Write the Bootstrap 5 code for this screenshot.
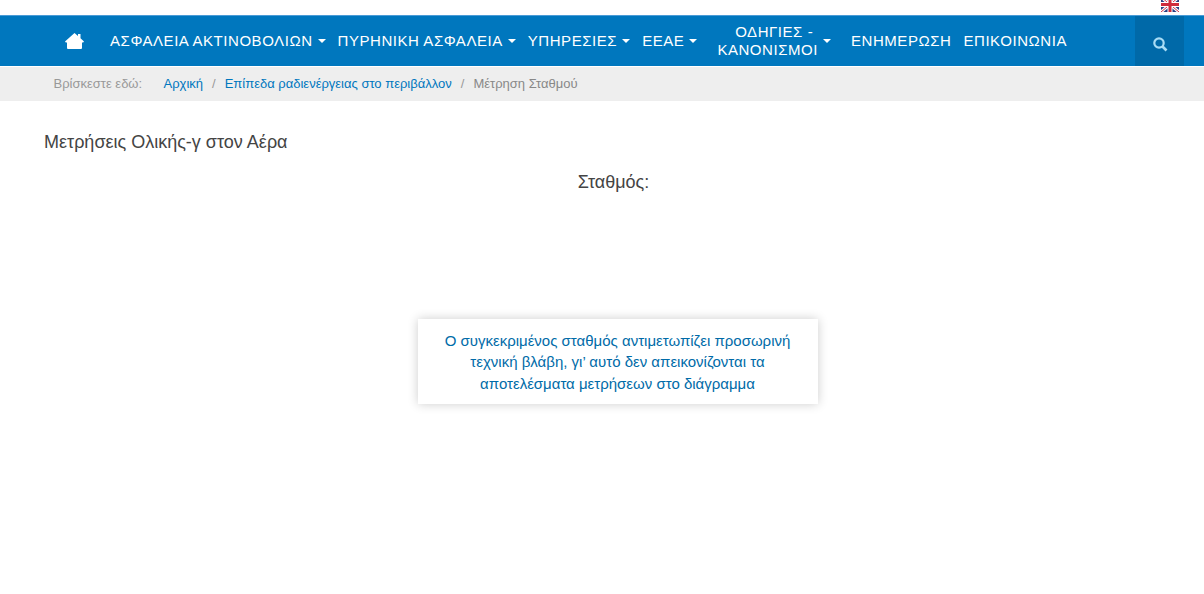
<!DOCTYPE html>
<html lang="el">
<head>
<meta charset="utf-8">
<title>Μέτρηση Σταθμού</title>
<link href="https://cdn.jsdelivr.net/npm/bootstrap@5.3.0/dist/css/bootstrap.min.css" rel="stylesheet">
<style>
body{font-family:"Liberation Sans",Arial,sans-serif;color:#333;background:#fff;min-height:594px}
.flagbar{height:15px;padding-right:25px;overflow:hidden}
.flagbar svg{display:block;margin-top:-3px}
.mainbar{height:51px;background:#0077be;border-top:1px solid #4a9bd6;padding:0 20px 0 65px}
.homelink{width:45px;color:#fff}
.menu{gap:12px;font-size:15px;letter-spacing:.55px;line-height:18px}
.menu a{color:#fff;text-decoration:none;white-space:nowrap}
.menu a.dropdown-toggle::after{margin-left:5px;vertical-align:3px;border-top-width:4.5px;border-left-width:4.5px;border-right-width:4.5px}
.twoline{margin:0 8px;display:flex;align-items:center}
.twoline span{display:block;text-align:center}
.twoline .firstline{padding-left:13px}
.searchcell{width:49px;height:50px;background:#0069a8;padding-top:6px}
.crumbbar{height:35px;background:#eee;border-top:1px solid #fff;padding-left:53.5px;font-size:13px;color:#999}
.crumbbar .breadcrumb{font-size:13px;--bs-breadcrumb-divider-color:#999;--bs-breadcrumb-item-active-color:#888;--bs-breadcrumb-item-padding-x:9px}
.crumbbar a{color:#0077be;text-decoration:none}
.crumblabel{width:110px}
.maintitle{font-size:18px;font-weight:400;color:#444;margin:30px 0 0 44px;line-height:22px}
.stationline{font-size:18px;font-weight:400;color:#444;text-align:center;margin:18px 0 0;padding-left:23px;line-height:22px}
.noticewrap{margin-top:126px;padding-left:32px}
.noticebox{width:400px;height:85px;padding:11px 21px 11px 20px;background:#fff;box-shadow:0 0 10px rgba(0,0,0,.2);color:#006ba8;font-size:15px;line-height:1.42857;text-align:center}
</style>
</head>
<body>
<div class="flagbar d-flex justify-content-end">
<svg width="18" height="15" viewBox="0 0 18 15" aria-hidden="true">
<rect width="18" height="15" fill="#2a3f82"/>
<path d="M0 0L18 15M18 0L0 15" stroke="#fff" stroke-width="3"/>
<path d="M0 0L18 15M18 0L0 15" stroke="#d0344a" stroke-width="1"/>
<path d="M9 0V15M0 7.5H18" stroke="#fff" stroke-width="5"/>
<path d="M9 0V15M0 7.5H18" stroke="#cf2b3c" stroke-width="3"/>
</svg>
</div>
<nav class="mainbar d-flex align-items-center">
<a class="homelink d-block" href="#" aria-label="Αρχική">
<svg class="d-block" width="19" height="18" viewBox="0 0 19 18" fill="#fff"><path d="M9.5 1L13 4V2h2.500v4.200L19 9.600l-.8.8H17V16q0 1-1 1H3q-1 0-1-1V10.400H.8L0 9.600z"/></svg>
</a>
<div class="menu d-flex align-items-center flex-grow-1">
<a class="dropdown-toggle" href="#">ΑΣΦΑΛΕΙΑ ΑΚΤΙΝΟΒΟΛΙΩΝ</a>
<a class="dropdown-toggle" href="#">ΠΥΡΗΝΙΚΗ ΑΣΦΑΛΕΙΑ</a>
<a class="dropdown-toggle" href="#">ΥΠΗΡΕΣΙΕΣ</a>
<a class="dropdown-toggle" href="#">ΕΕΑΕ</a>
<a class="dropdown-toggle twoline" href="#"><span><span class="firstline">ΟΔΗΓΙΕΣ -</span><span>ΚΑΝΟΝΙΣΜΟΙ</span></span></a>
<a href="#">ΕΝΗΜΕΡΩΣΗ</a>
<a href="#">ΕΠΙΚΟΙΝΩΝΙΑ</a>
</div>
<div class="searchcell d-flex align-items-center justify-content-center">
<svg width="16" height="16" viewBox="0 0 16 16" fill="none" stroke="#a8dcf5" aria-label="Αναζήτηση"><circle cx="7" cy="7" r="4.700" stroke-width="2.200"/><path d="M10.500 10.500L14.500 14.500" stroke-width="2.600"/></svg>
</div>
</nav>
<div class="crumbbar d-flex align-items-center">
<span class="crumblabel">Βρίσκεστε εδώ:</span>
<ol class="breadcrumb mb-0">
<li class="breadcrumb-item"><a href="#">Αρχική</a></li>
<li class="breadcrumb-item"><a href="#">Επίπεδα ραδιενέργειας στο περιβάλλον</a></li>
<li class="breadcrumb-item active">Μέτρηση Σταθμού</li>
</ol>
</div>
<main>
<h1 class="maintitle">Μετρήσεις Ολικής-γ στον Αέρα</h1>
<h2 class="stationline">Σταθμός:</h2>
<div class="noticewrap d-flex justify-content-center">
<div class="noticebox">Ο συγκεκριμένος σταθμός αντιμετωπίζει προσωρινή τεχνική βλάβη, γι’ αυτό δεν απεικονίζονται τα αποτελέσματα μετρήσεων στο διάγραμμα</div>
</div>
</main>
<script src="https://cdn.jsdelivr.net/npm/bootstrap@5.3.0/dist/js/bootstrap.bundle.min.js"></script>
</body>
</html>
